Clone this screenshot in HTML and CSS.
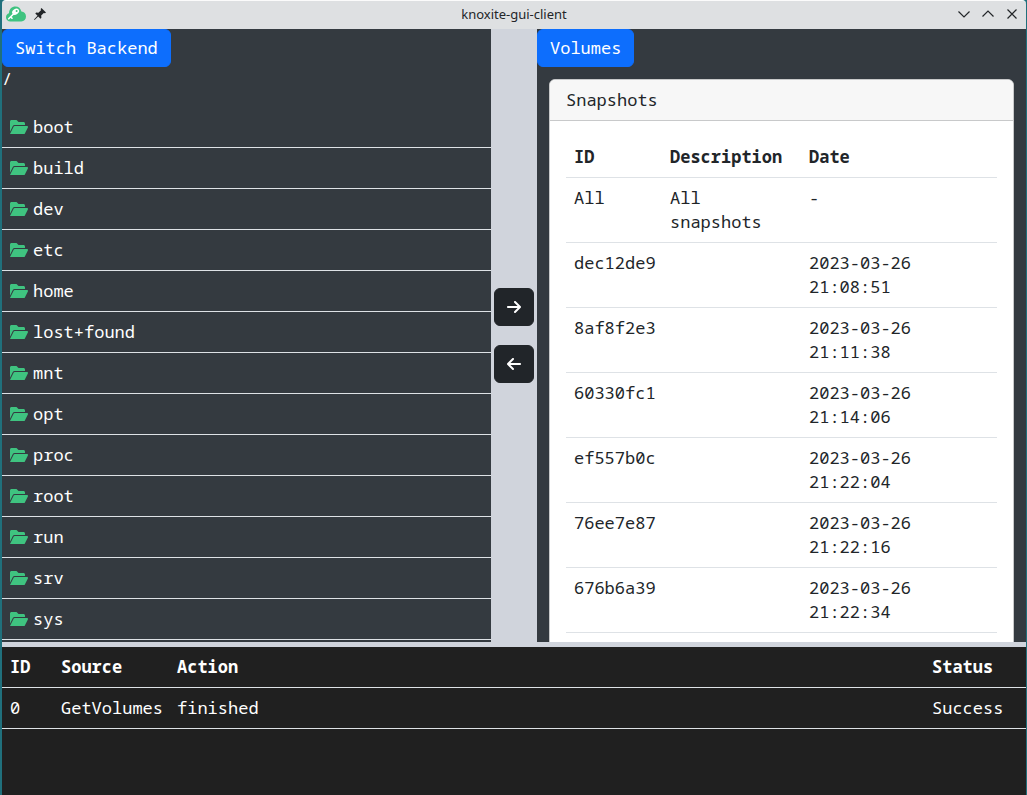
FILE: index.html
```html
<!DOCTYPE html>
<html lang="en">
<head>
<meta charset="utf-8">
<title>knoxite-gui-client</title>
<link rel="stylesheet" href="styles.css">
</head>
<body>
<svg class="defs" aria-hidden="true">
  <symbol id="folder" viewBox="0 0 576 512"><path fill="currentColor" d="M147.800 192H480V144C480 117.500 458.500 96 432 96h-160l-64-64h-160C21.490 32 0 53.490 0 80v328.400l90.540-181.100C101.400 205.600 123.400 192 147.800 192zM543.100 224H147.800C135.700 224 124.600 230.800 119.200 241.700L0 480h447.100c12.120 0 23.200-6.852 28.620-17.690l96-192C583.200 249 567.700 224 543.100 224z"/></symbol>
  <symbol id="arrow" viewBox="0 0 448 512"><path fill="currentColor" d="M438.600 278.600l-160 160C272.400 444.900 264.200 448 256 448s-16.380-3.125-22.620-9.375c-12.500-12.500-12.500-32.750 0-45.250L338.800 288H32C14.330 288 0 273.700 0 256S14.330 224 32 224h306.800l-105.400-105.400c-12.500-12.500-12.500-32.750 0-45.250s32.750-12.500 45.250 0l160 160C451.100 245.900 451.100 266.100 438.600 278.600z"/></symbol>
</svg>
<div class="window">
  <header class="titlebar">
    <div class="titlebar-side">
      <svg class="app-icon" viewBox="0 0 20 16" aria-hidden="true"><path fill="#3fc380" d="M4.500 15.500C1.800 15.500 0 13.700 0 11.300 0 9.300 1.200 7.900 3 7.300 3.100 3.100 5.800.5 9.500.5c3 0 5.200 1.900 5.900 5C18.200 5.600 20 7.600 20 10.600c0 3-1.900 4.900-4.700 4.900z"/><path stroke="#fff" stroke-width="1.600" stroke-linecap="round" fill="none" d="M8 7.500 2.700 12.800M4.800 11l1.200 1.200"/><ellipse cx="9.600" cy="5.700" rx="3.700" ry="2.800" transform="rotate(-35 9.600 5.700)" fill="#fff"/><circle cx="10.600" cy="4.900" r="1" fill="#3fc380"/></svg>
      <button class="tool" aria-label="Keep above"><svg class="pin" viewBox="0 0 12 12"><path fill="#232629" d="M7.500 0 12 4.500 11 5.300 9.800 5 7.200 7.600 7.400 9.800 6.500 10.700 4.200 8.500.6 12 0 11.400 3.500 7.800 1.300 5.500 2.200 4.600 4.400 4.800 7 2.200 6.700 1z"/></svg></button>
    </div>
    <span class="title">knoxite-gui-client</span>
    <div class="titlebar-side controls">
      <button class="tool" aria-label="Minimize"><svg viewBox="0 0 12 12"><path d="M.500 3.500l5.500 5.500 5.500-5.500"/></svg></button>
      <button class="tool" aria-label="Maximize"><svg viewBox="0 0 12 12"><path d="M.500 8.500l5.500-5.500 5.500 5.500"/></svg></button>
      <button class="tool" aria-label="Close"><svg viewBox="0 0 12 12"><path d="M1.500 1.500l9 9M10.500 1.500l-9 9"/></svg></button>
    </div>
  </header>
  <main class="panes">
    <section class="pane">
      <button class="btn btn-primary">Switch Backend</button>
      <p class="path">/</p>
      <ul class="files">
        <li><svg><use href="#folder"/></svg>boot</li>
        <li><svg><use href="#folder"/></svg>build</li>
        <li><svg><use href="#folder"/></svg>dev</li>
        <li><svg><use href="#folder"/></svg>etc</li>
        <li><svg><use href="#folder"/></svg>home</li>
        <li><svg><use href="#folder"/></svg>lost+found</li>
        <li><svg><use href="#folder"/></svg>mnt</li>
        <li><svg><use href="#folder"/></svg>opt</li>
        <li><svg><use href="#folder"/></svg>proc</li>
        <li><svg><use href="#folder"/></svg>root</li>
        <li><svg><use href="#folder"/></svg>run</li>
        <li><svg><use href="#folder"/></svg>srv</li>
        <li><svg><use href="#folder"/></svg>sys</li>
      </ul>
    </section>
    <div class="transfer">
      <button class="btn btn-dark" aria-label="Store"><svg><use href="#arrow"/></svg></button>
      <button class="btn btn-dark back" aria-label="Restore"><svg><use href="#arrow"/></svg></button>
    </div>
    <section class="pane">
      <button class="btn btn-primary">Volumes</button>
      <div class="card">
        <h2 class="card-header">Snapshots</h2>
        <div class="card-body">
          <table class="table snapshots">
            <colgroup><col class="col-id"><col class="col-description"><col></colgroup>
            <thead><tr><th>ID</th><th>Description</th><th>Date</th></tr></thead>
            <tbody>
              <tr><td>All</td><td>All snapshots</td><td>-</td></tr>
              <tr><td>dec12de9</td><td></td><td>2023-03-26 21:08:51</td></tr>
              <tr><td>8af8f2e3</td><td></td><td>2023-03-26 21:11:38</td></tr>
              <tr><td>60330fc1</td><td></td><td>2023-03-26 21:14:06</td></tr>
              <tr><td>ef557b0c</td><td></td><td>2023-03-26 21:22:04</td></tr>
              <tr><td>76ee7e87</td><td></td><td>2023-03-26 21:22:16</td></tr>
              <tr><td>676b6a39</td><td></td><td>2023-03-26 21:22:34</td></tr>
            </tbody>
          </table>
        </div>
      </div>
    </section>
  </main>
  <section class="log">
    <table class="table actions">
      <colgroup><col class="col-number"><col class="col-source"><col><col class="col-status"></colgroup>
      <thead><tr><th>ID</th><th>Source</th><th>Action</th><th>Status</th></tr></thead>
      <tbody><tr><td>0</td><td>GetVolumes</td><td>finished</td><td>Success</td></tr></tbody>
    </table>
  </section>
</div>
</body>
</html>
```
FILE: styles.css
```css
* { box-sizing: border-box; }

body {
  margin: 0;
  background: #20707c;
  color: #fff;
  font: 17px/24px "Noto Sans Mono", "DejaVu Sans Mono", monospace;
}

.defs { display: none; }

.window {
  display: flex;
  flex-direction: column;
  height: 100vh;
  padding: 0 1px 0 2px;
}

.titlebar {
  display: grid;
  grid-template-columns: 1fr auto 1fr;
  align-items: center;
  flex: none;
  height: 29px;
  padding-bottom: 2px;
  border-top: 1px solid #fbfbfb;
  border-radius: 4px 4px 0 0;
  background: #dee0e2;
  color: #232629;
}

.title { font: 13px/20px "Noto Sans", sans-serif; }

.titlebar-side {
  display: flex;
  align-items: center;
  gap: 8px;
  padding: 0 4px;
}

.controls { justify-content: flex-end; padding-right: 8px; gap: 12px; }

.app-icon { width: 20px; height: 16px; }

.tool {
  display: flex;
  padding: 0;
  border: 0;
  background: none;
}

.tool svg {
  width: 12px;
  height: 12px;
  fill: none;
  stroke: #232629;
  stroke-width: 1.2;
}

.tool .pin { stroke: none; }

.panes {
  display: grid;
  grid-template-columns: 1fr 46px 1fr;
  flex: 1;
  min-height: 0;
}

.pane { overflow: hidden; background: #343a40; }

.btn {
  display: block;
  padding: 6px 12px;
  border: 1px solid;
  border-radius: 6px;
  color: #fff;
  font: inherit;
}

.btn-primary { border-color: #0d6efd; background: #0d6efd; }

.btn-dark { border-color: #212529; background: #212529; }

.btn-dark svg { display: block; width: 14px; height: 24px; }

.back svg { transform: scaleX(-1); }

.path { margin: 0 0 16px; }

.files { margin: 0; padding: 0; list-style: none; }

.files li {
  display: flex;
  align-items: center;
  gap: 5px;
  padding: 8px;
  border-bottom: 1px solid #dee2e6;
}

.files svg { width: 18px; height: 16px; color: #3fc380; }

.transfer {
  display: flex;
  flex-direction: column;
  align-items: center;
  justify-content: center;
  gap: 19px;
  background: #d0d4dc;
}

.card {
  margin: 12px;
  border: 1px solid #c8c9ca;
  border-radius: 6px;
  background: #fff;
  color: #212529;
}

.card-header {
  margin: 0;
  padding: 8px 16px;
  border-bottom: 1px solid #c8c9ca;
  border-radius: 5px 5px 0 0;
  background: #f7f7f7;
  font: inherit;
}

.card-body { padding: 16px; }

.table {
  width: 100%;
  border-collapse: collapse;
  table-layout: fixed;
}

.table th,
.table td {
  padding: 8px;
  border-bottom: 1px solid #dee2e6;
  text-align: left;
  vertical-align: top;
}

.col-id { width: 96px; }
.col-description { width: 139px; }
.col-number { width: 51px; }
.col-source { width: 116px; }
.col-status { width: 102px; }

.log {
  flex: none;
  height: 153px;
  border-top: 5px solid #d0d4dc;
  background: #202020;
}
```
